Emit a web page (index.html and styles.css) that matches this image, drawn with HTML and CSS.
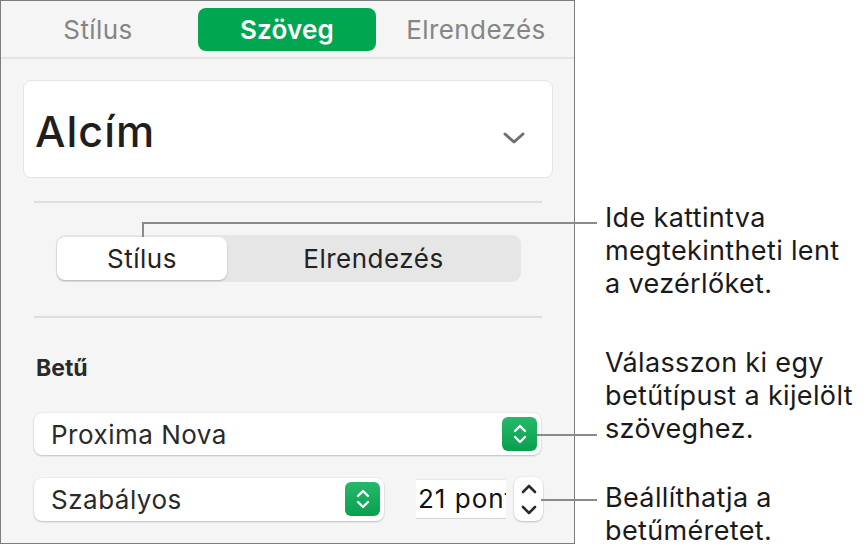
FILE: index.html
```html
<!DOCTYPE html>
<html lang="hu">
<head>
  <meta charset="UTF-8" />
  <meta name="viewport" content="width=device-width, initial-scale=1.0" />
  <title>Szöveg - Formátum</title>
  <link rel="stylesheet" href="styles.css">
</head>
<body>
<div class="page">

  <div class="panel">
    <div class="tabs">
      <div class="tab">Stílus</div>
      <div class="tab active">Szöveg</div>
      <div class="tab">Elrendezés</div>
    </div>

    <div class="style-box">
      <span class="style-name">Alcím</span>
      <svg class="chevron" width="24" height="14" viewBox="0 0 24 14">
        <polyline points="3,3 12,11 21,3" fill="none" stroke="#6f6f6f" stroke-width="3" stroke-linecap="round" stroke-linejoin="round"/>
      </svg>
    </div>

    <hr class="sep">

    <div class="seg">
      <div class="seg-item on">Stílus</div>
      <div class="seg-item">Elrendezés</div>
    </div>

    <hr class="sep sep2">

    <div class="section-title">Betű</div>

    <div class="popup popup-font">
      <span>Proxima Nova</span>
      <span class="popup-btn">
        <svg width="16" height="22" viewBox="0 0 16 22">
          <polyline points="3,8 8,3 13,8" fill="none" stroke="#fff" stroke-width="2.4" stroke-linecap="round" stroke-linejoin="round"/>
          <polyline points="3,14 8,19 13,14" fill="none" stroke="#fff" stroke-width="2.4" stroke-linecap="round" stroke-linejoin="round"/>
        </svg>
      </span>
    </div>

    <div class="font-row">
      <div class="popup popup-weight">
        <span>Szabályos</span>
        <span class="popup-btn">
          <svg width="16" height="22" viewBox="0 0 16 22">
            <polyline points="3,8 8,3 13,8" fill="none" stroke="#fff" stroke-width="2.4" stroke-linecap="round" stroke-linejoin="round"/>
            <polyline points="3,14 8,19 13,14" fill="none" stroke="#fff" stroke-width="2.4" stroke-linecap="round" stroke-linejoin="round"/>
          </svg>
        </span>
      </div>
      <div class="size-field"><span>21 pont</span></div>
      <div class="stepper">
        <svg width="18" height="12" viewBox="0 0 18 12">
          <polyline points="3,9 9,3 15,9" fill="none" stroke="#2b2b2b" stroke-width="2.6" stroke-linecap="round" stroke-linejoin="round"/>
        </svg>
        <svg width="18" height="12" viewBox="0 0 18 12">
          <polyline points="3,3 9,9 15,3" fill="none" stroke="#2b2b2b" stroke-width="2.6" stroke-linecap="round" stroke-linejoin="round"/>
        </svg>
      </div>
    </div>
  </div>

  <div class="notes">
    <p class="note note1">Ide kattintva<br>megtekintheti lent<br>a vezérlőket.</p>
    <p class="note note2">Válasszon ki egy<br>betűtípust a kijelölt<br>szöveghez.</p>
    <p class="note note3">Beállíthatja a<br>betűméretet.</p>
  </div>

  <!-- leader lines -->
  <div class="leader l1-v"></div>
  <div class="leader l1-h"></div>
  <div class="leader l2"></div>
  <div class="leader l3"></div>
</div>
</body>
</html>
```

FILE: styles.css
```css
body {
    margin: 0;
    background: #fff;
    font-family: Inter, "Noto Sans", sans-serif;
    color: #1d1d1d;
}

.page {
    position: relative;
    display: flex;
    width: 867px;
    height: 559px;
}

.panel {
    box-sizing: border-box;
    width: 575px;
    height: 544px;
    border: 1px solid #7d7d7d;
    background: #f5f5f5;
    flex-shrink: 0;
}

/* top tab bar */
.tabs {
    display: flex;
    gap: 11px;
    align-items: center;
    height: 56px;
    padding-left: 8px;
    border-bottom: 2px solid #e3e3e3;
}
.tab {
    width: 178px;
    height: 43px;
    line-height: 43px;
    text-align: center;
    font-size: 26px;
    letter-spacing: 0.4px;
    color: #858585;
    border-radius: 8px;
}
.tab.active {
    background: #00a650;
    color: #fff;
    font-weight: 600;
    letter-spacing: 0.2px;
}

/* paragraph style box */
.style-box {
    display: flex;
    align-items: center;
    justify-content: space-between;
    box-sizing: border-box;
    height: 98px;
    margin: 21px 21px 0 22px;
    padding: 4px 26px 0 11px;
    background: #fff;
    border: 1px solid #e4e4e4;
    border-radius: 8px;
}
.style-name {
    font-size: 43px;
    font-weight: 500;
    letter-spacing: 1px;
    color: #1f1f1f;
}
.chevron {
    margin-top: 14px;
}

.sep {
    height: 2px;
    margin: 23px 32px 0 33px;
    border: none;
    background: #dedede;
}
.sep2 {
    margin-top: 34px;
}

/* segmented control */
.seg {
    display: flex;
    box-sizing: border-box;
    width: 465px;
    height: 47px;
    margin: 32px 0 0 55px;
    padding: 2px 1px;
    background: #e6e6e6;
    border-radius: 9px;
}
.seg-item {
    flex: 1;
    line-height: 43px;
    text-align: center;
    font-size: 26px;
    letter-spacing: 0.5px;
    color: #232323;
}
.seg-item.on {
    flex: 0 0 170px;
    background: #fff;
    border-radius: 8px;
    box-shadow: 0 1px 2px rgba(0, 0, 0, 0.22);
}

.section-title {
    margin: 38px 0 0 35px;
    font-size: 23px;
    line-height: 25px;
    font-weight: 700;
    color: #2a2a2a;
}

/* popup menus */
.popup {
    display: flex;
    align-items: center;
    justify-content: space-between;
    box-sizing: border-box;
    background: #fff;
    border-radius: 8px;
    box-shadow: 0 1px 2px rgba(0, 0, 0, 0.2), 0 0 0 0.5px rgba(0, 0, 0, 0.06);
    font-size: 26px;
    letter-spacing: 0.5px;
    color: #2a2a2a;
    padding: 0 4px 0 17px;
}
.popup-font {
    width: 507px;
    height: 42px;
    margin: 32px 0 0 33px;
}
.popup-btn {
    display: flex;
    align-items: center;
    justify-content: center;
    width: 35px;
    height: 34px;
    border-radius: 6px;
    background: linear-gradient(#27b86a, #07a04f);
}

.font-row {
    display: flex;
    align-items: center;
    height: 44px;
    margin: 22px 0 0 33px;
}
.popup-weight {
    width: 350px;
    height: 43px;
}
.size-field {
    box-sizing: border-box;
    width: 90px;
    height: 40px;
    margin-left: 32px;
    padding-left: 2px;
    overflow: hidden;
    white-space: nowrap;
    background: #fff;
    border-top: 1px solid #e8e8e8;
    border-bottom: 1px solid #d6d6d6;
    font-size: 26px;
    letter-spacing: 1px;
    line-height: 38px;
    color: #111;
}
.stepper {
    display: flex;
    flex-direction: column;
    align-items: center;
    justify-content: center;
    gap: 9px;
    width: 29px;
    height: 44px;
    margin-left: 8px;
    background: #fff;
    border-radius: 8px;
    box-shadow: 0 1px 2px rgba(0, 0, 0, 0.2), 0 0 0 0.5px rgba(0, 0, 0, 0.06);
}

/* callout text */
.notes {
    padding-left: 30px;
}
.note {
    margin: 0;
    font-size: 27px;
    letter-spacing: 0.35px;
    line-height: 33px;
    color: #1a1a1a;
}
.note1 { margin-top: 201px; }
.note2 { margin-top: 46px; }
.note3 { margin-top: 36px; }

/* leader lines drawn over the panel */
.leader {
    position: absolute;
    background: #8a8a8a;
}
.l1-v { left: 142px; top: 222px; width: 2px; height: 15px; }
.l1-h { left: 142px; top: 222px; width: 455px; height: 2px; }
.l2 { left: 537px; top: 434px; width: 60px; height: 2px; }
.l3 { left: 541px; top: 499px; width: 56px; height: 2px; }
```
